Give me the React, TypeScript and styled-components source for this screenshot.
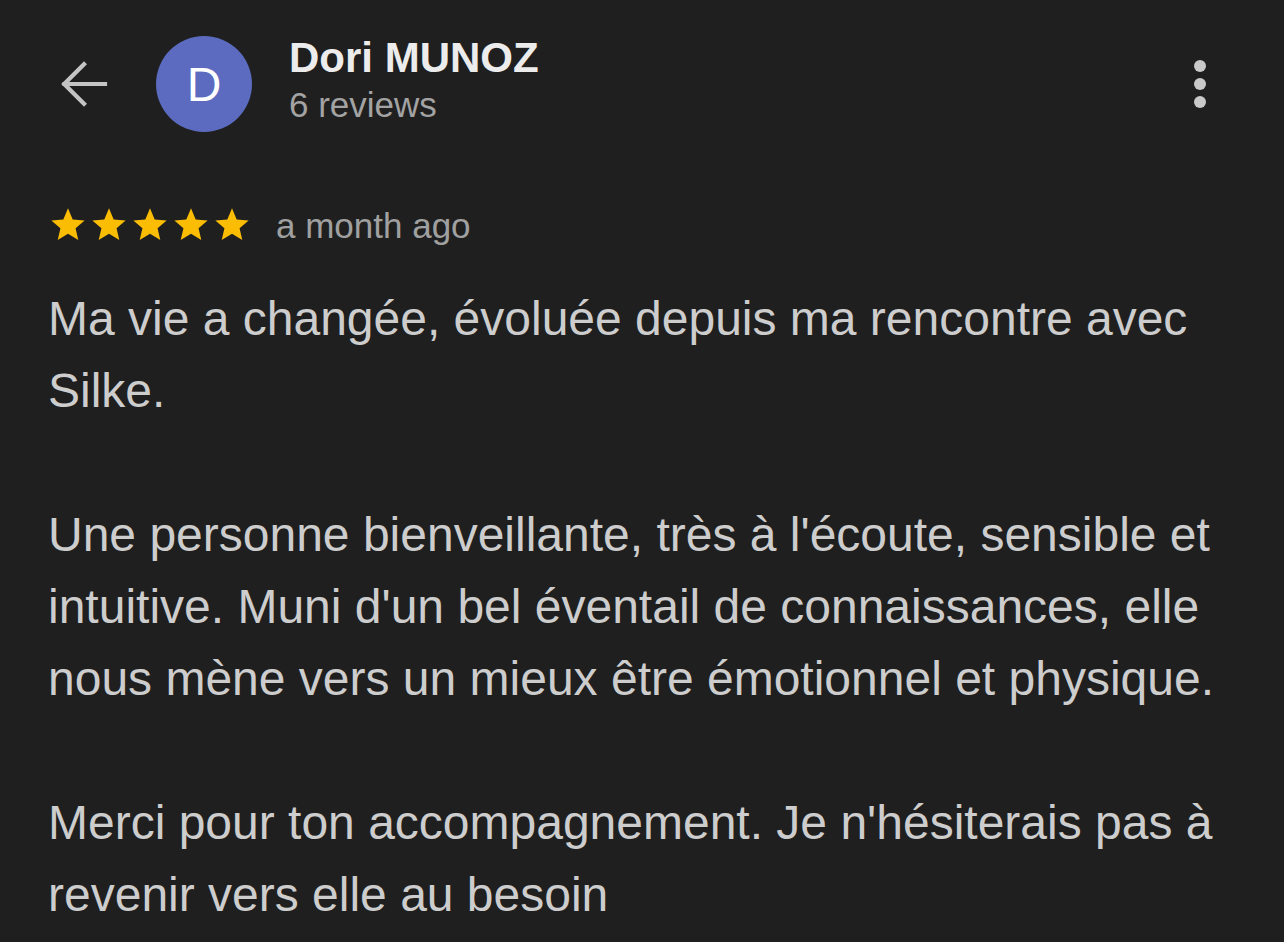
import React from "react";
import styled, { createGlobalStyle } from "styled-components";

const GlobalStyle = createGlobalStyle`
  html, body {
    margin: 0;
    padding: 0;
    background: #1f1f1f;
  }
  body {
    font-family: "Liberation Sans", Arial, sans-serif;
    -webkit-font-smoothing: antialiased;
  }
`;

const Page = styled.div`
  height: 942px;
  background: #1f1f1f;
  overflow: hidden;
`;

const Header = styled.header`
  display: flex;
  align-items: center;
  height: 96px;
  padding: 36px 72px 0 48px;
`;

const BackButton = styled.button`
  width: 72px;
  height: 72px;
  padding: 0;
  margin-right: 36px;
  background: transparent;
  border: none;
  display: flex;
  align-items: center;
  justify-content: center;
  color: #c4c4c4;
`;

const Avatar = styled.div`
  width: 96px;
  height: 96px;
  border-radius: 50%;
  background: #5c6bc0;
  color: #ffffff;
  display: flex;
  align-items: center;
  justify-content: center;
  font-size: 48px;
  flex-shrink: 0;
`;

const Identity = styled.div`
  flex: 1;
  display: flex;
  flex-direction: column;
  margin-left: 37px;
  margin-top: -8px;
`;

const Name = styled.div`
  font-size: 42px;
  font-weight: 700;
  color: #ececec;
  line-height: 50px;
`;

const ReviewCount = styled.div`
  font-size: 35px;
  color: #a3a3a3;
  line-height: 44px;
`;

const MenuButton = styled.button`
  width: 24px;
  display: flex;
  flex-direction: column;
  align-items: center;
  gap: 6px;
  background: transparent;
  border: none;
  padding: 0;
`;

const Dot = styled.span`
  width: 12px;
  height: 12px;
  border-radius: 50%;
  background: #c9c9c9;
`;

const RatingRow = styled.div`
  display: flex;
  align-items: center;
  gap: 24px;
  padding: 68px 48px 0;
  height: 50px;
`;

const Stars = styled.div`
  display: flex;
  gap: 1px;
`;

const When = styled.span`
  font-size: 35px;
  color: #a0a0a0;
  margin-top: 2px;
`;

const Body = styled.div`
  padding: 33px 48px 0;
  max-width: 1188px;
`;

const Paragraph = styled.p`
  margin: 0 0 72px;
  font-size: 48px;
  line-height: 72px;
  color: #cdcdcd;
`;

const Star: React.FC = () => (
  <svg width="40" height="40" viewBox="0 0 24 24">
    <path
      fill="#fbbc04"
      d="M12 17.27L18.18 21l-1.64-7.03L22 9.24l-7.19-.61L12 2 9.19 8.63 2 9.24l5.46 4.73L5.82 21z"
    />
  </svg>
);

const ArrowBack: React.FC = () => (
  <svg width="56" height="56" viewBox="0 0 24 24" fill="none">
    <path
      d="M21 12H3.6M12 3.5 3.5 12l8.5 8.5"
      stroke="currentColor"
      strokeWidth="1.8"
      strokeLinecap="square"
    />
  </svg>
);

const App: React.FC = () => {
  return (
    <Page>
      <GlobalStyle />
      <Header>
        <BackButton aria-label="Back">
          <ArrowBack />
        </BackButton>
        <Avatar>D</Avatar>
        <Identity>
          <Name>Dori MUNOZ</Name>
          <ReviewCount>6 reviews</ReviewCount>
        </Identity>
        <MenuButton aria-label="More">
          <Dot />
          <Dot />
          <Dot />
        </MenuButton>
      </Header>

      <RatingRow>
        <Stars>
          {[0, 1, 2, 3, 4].map((i) => (
            <Star key={i} />
          ))}
        </Stars>
        <When>a month ago</When>
      </RatingRow>

      <Body>
        <Paragraph>
          Ma vie a changée, évoluée depuis ma rencontre avec Silke.
        </Paragraph>
        <Paragraph>
          Une personne bienveillante, très à l'écoute, sensible et intuitive.
          Muni d'un bel éventail de connaissances, elle nous mène vers un
          mieux être émotionnel et physique.
        </Paragraph>
        <Paragraph>
          Merci pour ton accompagnement. Je n'hésiterais pas à revenir vers
          elle au besoin
        </Paragraph>
      </Body>
    </Page>
  );
};

export default App;
